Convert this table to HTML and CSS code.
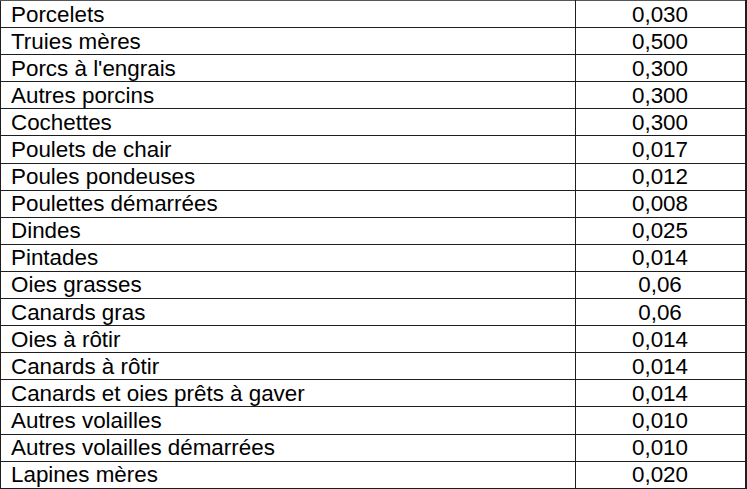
FILE: index.html
```html
<!DOCTYPE html>
<html lang="fr">
<head>
<meta charset="utf-8">
<link rel="stylesheet" href="styles.css">
</head>
<body>
<table class="grid">
<tbody>
<tr><td class="name">Porcelets</td><td class="val">0,030</td></tr>
<tr><td class="name">Truies mères</td><td class="val">0,500</td></tr>
<tr><td class="name">Porcs à l'engrais</td><td class="val">0,300</td></tr>
<tr><td class="name">Autres porcins</td><td class="val">0,300</td></tr>
<tr><td class="name">Cochettes</td><td class="val">0,300</td></tr>
<tr><td class="name">Poulets de chair</td><td class="val">0,017</td></tr>
<tr><td class="name">Poules pondeuses</td><td class="val">0,012</td></tr>
<tr><td class="name">Poulettes démarrées</td><td class="val">0,008</td></tr>
<tr><td class="name">Dindes</td><td class="val">0,025</td></tr>
<tr><td class="name">Pintades</td><td class="val">0,014</td></tr>
<tr><td class="name">Oies grasses</td><td class="val">0,06</td></tr>
<tr><td class="name">Canards gras</td><td class="val">0,06</td></tr>
<tr><td class="name">Oies à rôtir</td><td class="val">0,014</td></tr>
<tr><td class="name">Canards à rôtir</td><td class="val">0,014</td></tr>
<tr><td class="name">Canards et oies prêts à gaver</td><td class="val">0,014</td></tr>
<tr><td class="name">Autres volailles</td><td class="val">0,010</td></tr>
<tr><td class="name">Autres volailles démarrées</td><td class="val">0,010</td></tr>
<tr><td class="name">Lapines mères</td><td class="val">0,020</td></tr>
</tbody>
</table>
</body>
</html>
```
FILE: styles.css
```css
html, body {
  margin: 0;
  padding: 0;
  background: #fff;
}
.grid {
  border-collapse: collapse;
  width: 747px;
  table-layout: fixed;
  font-family: "Liberation Sans", Arial, sans-serif;
  font-size: 22.4px;
  color: #000;
}
.grid td {
  height: 27.1px;
  padding: 0;
  border: 1px solid #1e1e1e;
  vertical-align: middle;
  line-height: 25px;
  white-space: nowrap;
  box-sizing: border-box;
}
.grid .name {
  width: 575px;
  padding-left: 10px;
  border-left: 1.5px solid #1e1e1e;
}
.grid .val {
  text-align: center;
  border-right: 2px solid #1e1e1e;
  padding-right: 1px;
}
.grid tr:first-child td {
  border-top: 1px solid #555;
}
```
